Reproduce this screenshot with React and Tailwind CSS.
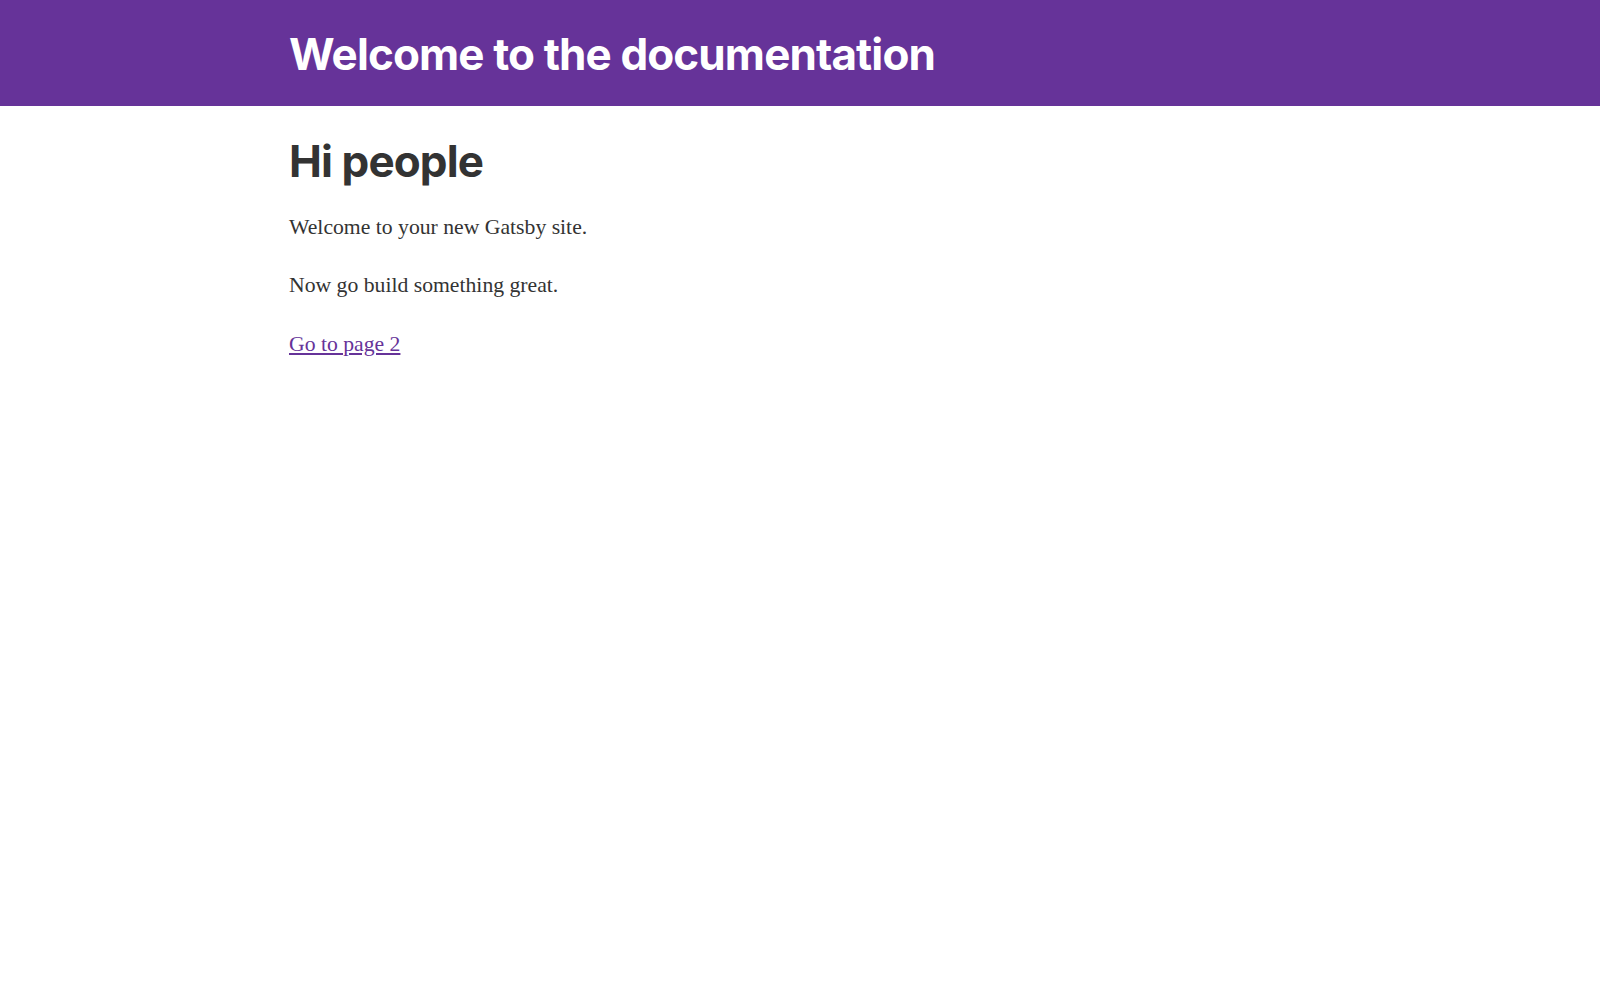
export default function App() {
  return (
    <div className="min-h-screen bg-white">
      <header className="h-[106px] bg-[#663399] pt-[32px]">
        <div className="pl-[289px]">
          <h1 className="font-['Inter',sans-serif] text-[44px] font-bold leading-none tracking-[-0.02em] text-white">
            Welcome to the documentation
          </h1>
        </div>
      </header>

      <main className="pl-[289px] pt-[33px] text-[#333333]">
        <h1 className="font-['Inter',sans-serif] text-[44px] font-bold leading-none tracking-[-0.02em]">
          Hi people
        </h1>
        <p className="mt-[30px] font-['Liberation_Serif',serif] text-[21.7px] leading-[28px]">
          Welcome to your new Gatsby site.
        </p>
        <p className="mt-[30px] font-['Liberation_Serif',serif] text-[21.7px] leading-[28px]">
          Now go build something great.
        </p>
        <p className="mt-[31px] font-['Liberation_Serif',serif] text-[21.7px] leading-[28px]">
          <a href="#" className="text-[#663399] underline">
            Go to page 2
          </a>
        </p>
      </main>
    </div>
  );
}
